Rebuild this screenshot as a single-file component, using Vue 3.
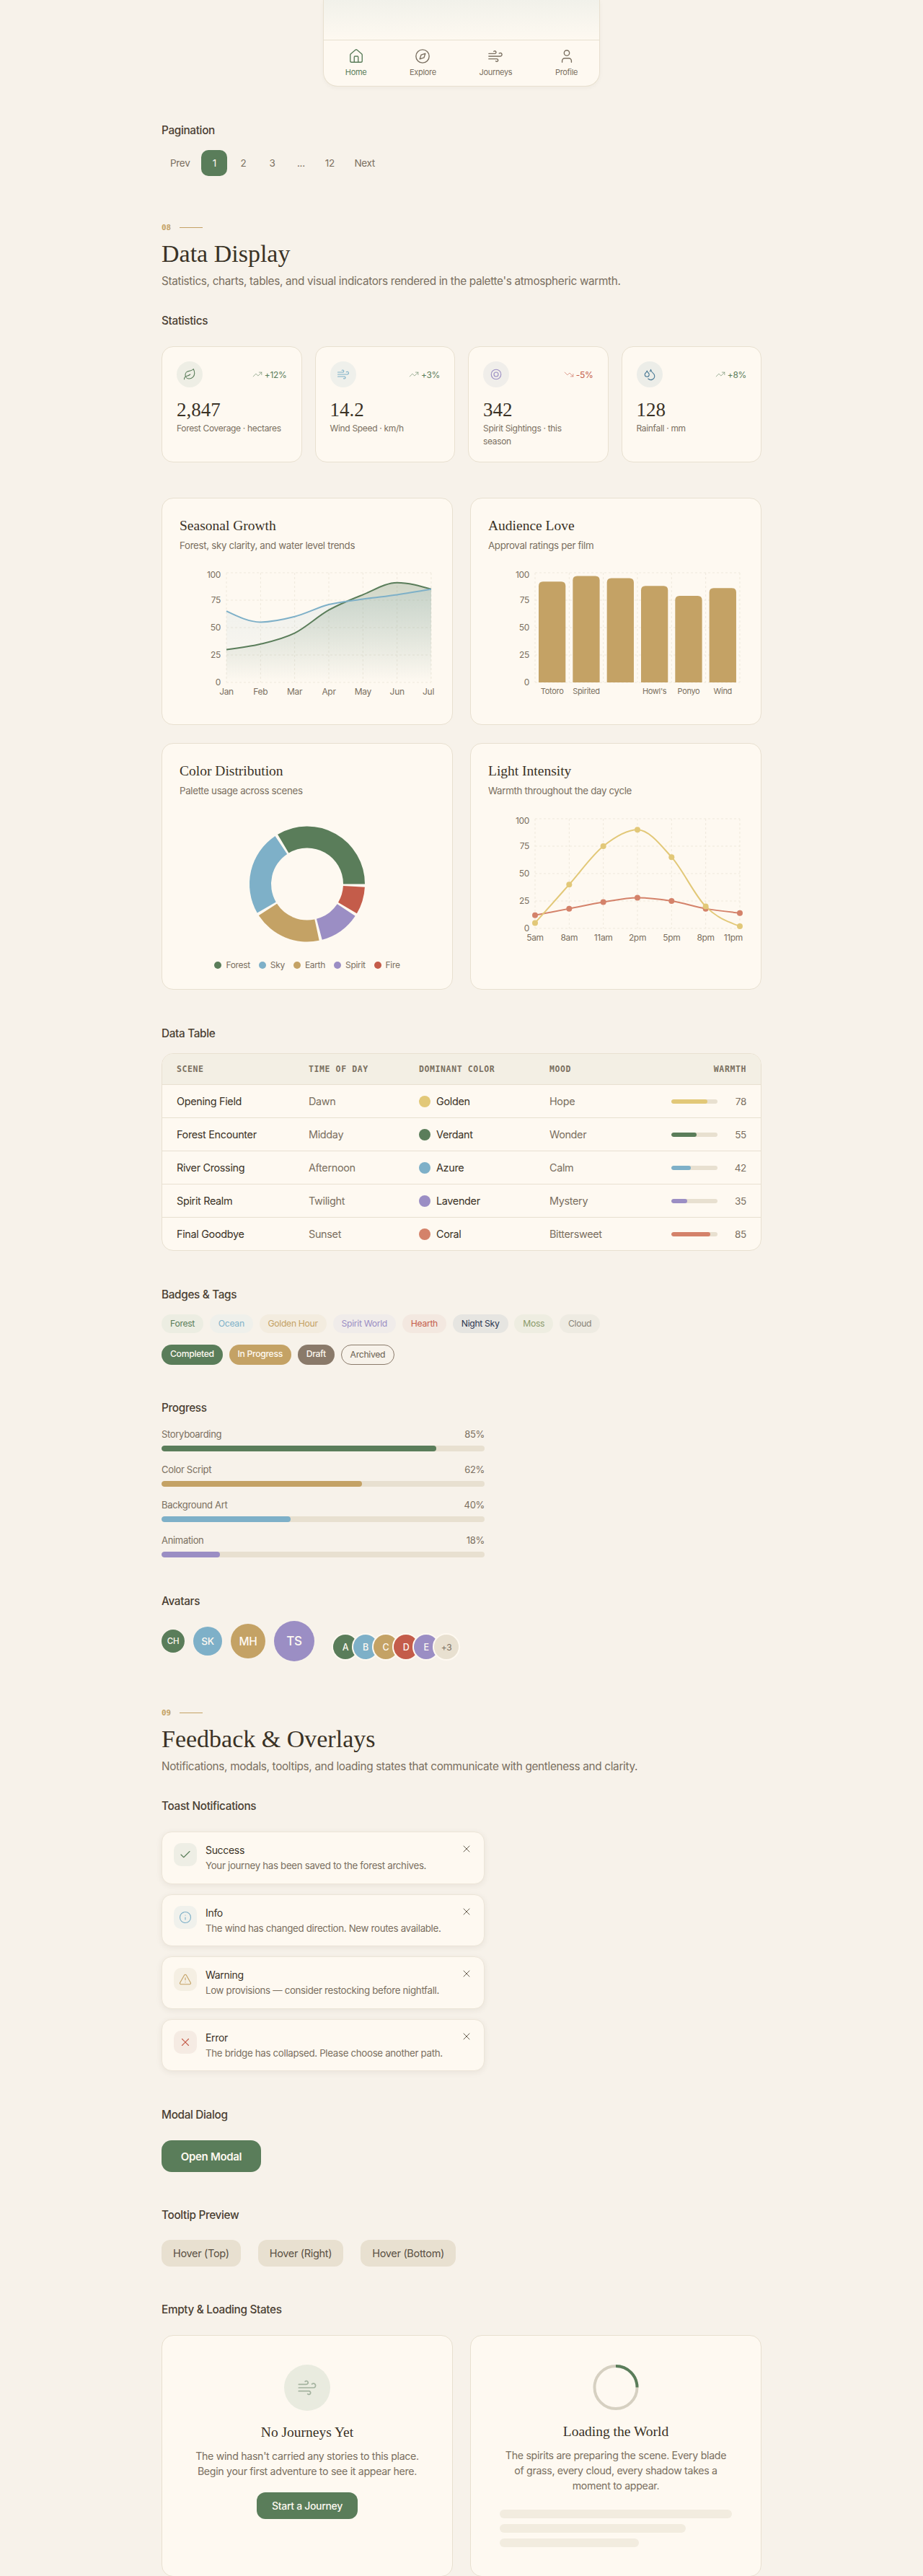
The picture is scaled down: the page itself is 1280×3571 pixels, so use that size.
<script setup>
const C = { forest: '#5a7d5a', sky: '#7eb0c8', earth: '#c4a265', spirit: '#9b8ec4', fire: '#c45c4a', coral: '#d4826a', golden: '#e2c878' }

function monotone(pts) {
  const n = pts.length
  const dx = [], s = []
  for (let i = 0; i < n - 1; i++) {
    dx[i] = pts[i + 1][0] - pts[i][0]
    s[i] = (pts[i + 1][1] - pts[i][1]) / dx[i]
  }
  const t = []
  for (let i = 1; i < n - 1; i++) {
    const p = (s[i - 1] * dx[i] + s[i] * dx[i - 1]) / (dx[i - 1] + dx[i])
    t[i] = (Math.sign(s[i - 1]) + Math.sign(s[i])) * Math.min(Math.abs(s[i - 1]), Math.abs(s[i]), 0.5 * Math.abs(p)) || 0
  }
  t[0] = (3 * s[0] - t[1]) / 2
  t[n - 1] = (3 * s[n - 2] - t[n - 2]) / 2
  let d = `M${pts[0][0]},${pts[0][1]}`
  for (let i = 0; i < n - 1; i++) {
    const h = dx[i] / 3
    d += `C${pts[i][0] + h},${pts[i][1] + h * t[i]} ${pts[i + 1][0] - h},${pts[i + 1][1] - h * t[i + 1]} ${pts[i + 1][0]},${pts[i + 1][1]}`
  }
  return d
}

const X0 = 65
const STEP = 47.33
const xAt = (i) => X0 + i * STEP
const chart = (top, zero) => {
  const yAt = (v) => zero - (v * (zero - top)) / 100
  return {
    top, zero, yAt,
    yTicks: [100, 75, 50, 25, 0].map((v) => ({ v, y: yAt(v), ty: v === 100 ? yAt(v) + 7 : yAt(v) + 4 })),
    pts: (vals) => vals.map((v, i) => [xAt(i), yAt(v)]),
  }
}
const xGrid = [0, 1, 2, 3, 4, 5, 6].map(xAt)

const growth = chart(8, 160)
const gForest = growth.pts([30, 35, 45, 66, 80, 91, 85])
const gSky = growth.pts([65, 55, 60, 71, 76, 80, 85])
const forestLine = monotone(gForest)
const skyLine = monotone(gSky)
const forestArea = `${forestLine}L${xAt(6)},160L${xAt(0)},160Z`
const skyArea = `${skyLine}L${xAt(6)},160L${xAt(0)},160Z`
const months = ['Jan', 'Feb', 'Mar', 'Apr', 'May', 'Jun', 'Jul']

const bars = [
  { label: 'Totoro', v: 92 }, { label: 'Spirited', v: 97 }, { label: '', v: 95 },
  { label: "Howl's", v: 88 }, { label: 'Ponyo', v: 79 }, { label: 'Wind', v: 86 },
].map((b, i) => {
  const y = growth.yAt(b.v)
  const x = X0 + 5 + i * STEP
  const w = 37.3
  return { ...b, cx: x + w / 2, d: `M${x},160V${y + 6}Q${x},${y} ${x + 6},${y}H${x + w - 6}Q${x + w},${y} ${x + w},${y + 6}V160Z` }
})

const light = chart(9, 161)
const hours = ['5am', '8am', '11am', '2pm', '5pm', '8pm', '11pm']
const lYellow = light.pts([5, 40, 75, 90, 65, 20, 2])
const lCoral = light.pts([12, 18, 24, 28, 25, 18, 14])
const yellowLine = monotone(lYellow)
const coralLine = monotone(lCoral)

const pieCx = 177, pieCy = 99.5, R = 80, r = 50
const pieData = [
  { name: 'Forest', v: 35, color: C.forest }, { name: 'Sky', v: 25, color: C.sky },
  { name: 'Earth', v: 20, color: C.earth }, { name: 'Spirit', v: 12, color: C.spirit },
  { name: 'Fire', v: 8, color: C.fire },
]
let ang = 0
const slices = pieData.map((p) => {
  const sweep = (345 * p.v) / 100
  const a0 = (ang * Math.PI) / 180, a1 = ((ang + sweep) * Math.PI) / 180
  ang += sweep + 3
  const pt = (rad, a) => `${pieCx + rad * Math.cos(a)},${pieCy - rad * Math.sin(a)}`
  const large = sweep > 180 ? 1 : 0
  return { color: p.color, d: `M${pt(R, a0)}A${R},${R} 0 ${large} 0 ${pt(R, a1)}L${pt(r, a1)}A${r},${r} 0 ${large} 1 ${pt(r, a0)}Z` }
})

const navItems = ['Home', 'Explore', 'Journeys', 'Profile']
const stats = [
  { icon: 'leaf', tone: 'forest', trend: '+12%', value: '2,847', label: 'Forest Coverage · hectares' },
  { icon: 'wind', tone: 'sky', trend: '+3%', value: '14.2', label: 'Wind Speed · km/h' },
  { icon: 'eye', tone: 'spirit', trend: '-5%', down: true, value: '342', label: 'Spirit Sightings · this\nseason' },
  { icon: 'drops', tone: 'water', trend: '+8%', value: '128', label: 'Rainfall · mm' },
]
const rows = [
  { scene: 'Opening Field', time: 'Dawn', dot: C.golden, color: 'Golden', mood: 'Hope', w: 78 },
  { scene: 'Forest Encounter', time: 'Midday', dot: C.forest, color: 'Verdant', mood: 'Wonder', w: 55 },
  { scene: 'River Crossing', time: 'Afternoon', dot: C.sky, color: 'Azure', mood: 'Calm', w: 42 },
  { scene: 'Spirit Realm', time: 'Twilight', dot: C.spirit, color: 'Lavender', mood: 'Mystery', w: 35 },
  { scene: 'Final Goodbye', time: 'Sunset', dot: C.coral, color: 'Coral', mood: 'Bittersweet', w: 85 },
]
const tags = [
  ['Forest', 'forest'], ['Ocean', 'ocean'], ['Golden Hour', 'gold'], ['Spirit World', 'spirit'],
  ['Hearth', 'hearth'], ['Night Sky', 'night'], ['Moss', 'moss'], ['Cloud', 'cloud'],
]
const progress = [
  { label: 'Storyboarding', v: 85, color: C.forest }, { label: 'Color Script', v: 62, color: C.earth },
  { label: 'Background Art', v: 40, color: C.sky }, { label: 'Animation', v: 18, color: C.spirit },
]
const avatars = [['CH', 's32', 'forest'], ['SK', 's40', 'sky'], ['MH', 's48', 'earth'], ['TS', 's56', 'spirit']]
const stack = [['A', 'forest'], ['B', 'sky'], ['C', 'earth'], ['D', 'fire'], ['E', 'spirit']]
const toasts = [
  { kind: 'success', title: 'Success', msg: 'Your journey has been saved to the forest archives.' },
  { kind: 'info', title: 'Info', msg: 'The wind has changed direction. New routes available.' },
  { kind: 'warning', title: 'Warning', msg: 'Low provisions — consider restocking before nightfall.' },
  { kind: 'error', title: 'Error', msg: 'The bridge has collapsed. Please choose another path.' },
]
</script>

<template>
  <div class="page">
    <div class="phone">
      <div class="phone-body"></div>
      <nav class="phone-nav">
        <div v-for="(n, i) in navItems" :key="n" class="nav-item" :class="{ active: i === 0 }">
          <svg class="ico nav-ico" viewBox="0 0 24 24">
            <template v-if="i === 0">
              <path d="M15 21v-8a1 1 0 0 0-1-1h-4a1 1 0 0 0-1 1v8" />
              <path d="M3 10a2 2 0 0 1 .709-1.528l7-5.999a2 2 0 0 1 2.582 0l7 5.999A2 2 0 0 1 21 10v9a2 2 0 0 1-2 2H5a2 2 0 0 1-2-2z" />
            </template>
            <template v-else-if="i === 1">
              <circle cx="12" cy="12" r="10" />
              <path d="m16.24 7.76-2.12 6.36-6.36 2.12 2.12-6.36 6.36-2.12z" />
            </template>
            <template v-else-if="i === 2">
              <path d="M17.7 7.7a2.5 2.5 0 1 1 1.8 4.3H2" />
              <path d="M9.6 4.6A2 2 0 1 1 11 8H2" />
              <path d="M12.6 19.4A2 2 0 1 0 14 16H2" />
            </template>
            <template v-else>
              <path d="M19 21v-2a4 4 0 0 0-4-4H9a4 4 0 0 0-4 4v2" />
              <circle cx="12" cy="7" r="4" />
            </template>
          </svg>
          <span>{{ n }}</span>
        </div>
      </nav>
    </div>

    <h3 class="sub first">Pagination</h3>
    <div class="pagination">
      <span class="pg wide">Prev</span>
      <span class="pg current">1</span>
      <span class="pg">2</span>
      <span class="pg">3</span>
      <span class="pg">...</span>
      <span class="pg">12</span>
      <span class="pg wide">Next</span>
    </div>

    <header class="sec-head">
      <div class="sec-num"><span>08</span><i></i></div>
      <h2>Data Display</h2>
      <p>Statistics, charts, tables, and visual indicators rendered in the palette's atmospheric warmth.</p>
    </header>

    <h3 class="sub roomy after-head">Statistics</h3>
    <div class="stats">
      <div v-for="s in stats" :key="s.label" class="stat">
        <div class="stat-top">
          <div class="stat-icon" :class="s.tone">
            <svg class="ico i18" viewBox="0 0 24 24">
              <template v-if="s.icon === 'leaf'">
                <path d="M11 20A7 7 0 0 1 9.8 6.1C15.5 5 17 4.48 19 2c1 2 2 4.18 2 8 0 5.5-4.78 10-10 10Z" />
                <path d="M2 21c0-3 1.85-5.36 5.08-6C9.5 14.52 12 13 13 12" />
              </template>
              <template v-else-if="s.icon === 'wind'">
                <path d="M17.7 7.7a2.5 2.5 0 1 1 1.8 4.3H2" />
                <path d="M9.6 4.6A2 2 0 1 1 11 8H2" />
                <path d="M12.6 19.4A2 2 0 1 0 14 16H2" />
              </template>
              <template v-else-if="s.icon === 'eye'">
                <circle cx="12" cy="12" r="9" />
                <circle cx="12" cy="12" r="4" />
              </template>
              <template v-else>
                <path d="M7 16.3c2.2 0 4-1.83 4-4.05 0-1.16-.57-2.26-1.71-3.19S7.29 6.75 7 5.3c-.29 1.45-1.14 2.84-2.29 3.76S3 11.1 3 12.25c0 2.22 1.8 4.05 4 4.05z" />
                <path d="M12.56 6.6A10.97 10.97 0 0 0 14 3.02c.5 2.5 2 4.9 4 6.5s3 3.5 3 5.5a6.98 6.98 0 0 1-11.91 4.97" />
              </template>
            </svg>
          </div>
          <div class="trend" :class="{ down: s.down }">
            <svg class="ico i14" viewBox="0 0 24 24">
              <template v-if="s.down">
                <path d="M22 17 13.5 8.5 8.5 13.5 2 7" /><path d="M16 17h6v-6" />
              </template>
              <template v-else>
                <path d="M22 7 13.5 15.5 8.5 10.5 2 17" /><path d="M16 7h6v6" />
              </template>
            </svg>
            <span>{{ s.trend }}</span>
          </div>
        </div>
        <div class="stat-value">{{ s.value }}</div>
        <div class="stat-label">{{ s.label }}</div>
      </div>
    </div>

    <div class="charts">
      <div class="card chart-card">
        <h4>Seasonal Growth</h4>
        <p>Forest, sky clarity, and water level trends</p>
        <svg class="chart" width="354" height="194" viewBox="0 0 354 194">
          <defs>
            <linearGradient id="gGreen" x1="0" y1="0" x2="0" y2="1">
              <stop offset="0" stop-color="#5a7d5a" stop-opacity=".28" />
              <stop offset="1" stop-color="#5a7d5a" stop-opacity="0" />
            </linearGradient>
            <linearGradient id="gBlue" x1="0" y1="0" x2="0" y2="1">
              <stop offset="0" stop-color="#7eb0c8" stop-opacity=".14" />
              <stop offset="1" stop-color="#7eb0c8" stop-opacity="0" />
            </linearGradient>
          </defs>
          <g class="grid">
            <line v-for="t in growth.yTicks" :key="t.v" :x1="xGrid[0]" :x2="xGrid[6]" :y1="t.y" :y2="t.y" />
            <line v-for="x in xGrid" :key="x" :x1="x" :x2="x" :y1="8" :y2="160" />
          </g>
          <path :d="forestArea" fill="url(#gGreen)" />
          <path :d="skyArea" fill="url(#gBlue)" />
          <path :d="forestLine" class="curve" stroke="#5a7d5a" />
          <path :d="skyLine" class="curve" stroke="#7eb0c8" />
          <g class="axis">
            <text v-for="t in growth.yTicks" :key="t.v" x="57" :y="t.ty" text-anchor="end">{{ t.v }}</text>
            <text v-for="(m, i) in months" :key="m" :x="i === 6 ? 353 : xGrid[i]" y="177" :text-anchor="i === 6 ? 'end' : 'middle'">{{ m }}</text>
          </g>
        </svg>
      </div>

      <div class="card chart-card">
        <h4>Audience Love</h4>
        <p>Approval ratings per film</p>
        <svg class="chart" width="354" height="194" viewBox="0 0 354 194">
          <g class="grid">
            <line v-for="t in growth.yTicks" :key="t.v" :x1="xGrid[0]" :x2="xGrid[6]" :y1="t.y" :y2="t.y" />
            <line v-for="x in xGrid" :key="x" :x1="x" :x2="x" :y1="8" :y2="160" />
          </g>
          <path v-for="b in bars" :key="b.cx" :d="b.d" fill="#c4a265" />
          <g class="axis">
            <text v-for="t in growth.yTicks" :key="t.v" x="57" :y="t.ty" text-anchor="end">{{ t.v }}</text>
            <text v-for="b in bars" :key="b.cx" class="small" :x="b.cx" y="176" text-anchor="middle">{{ b.label }}</text>
          </g>
        </svg>
      </div>

      <div class="card chart-card">
        <h4>Color Distribution</h4>
        <p>Palette usage across scenes</p>
        <svg class="chart" width="354" height="200" viewBox="0 0 354 200">
          <path v-for="s in slices" :key="s.color" :d="s.d" :fill="s.color" />
        </svg>
        <div class="legend">
          <span v-for="p in pieData" :key="p.name"><i :style="{ background: p.color }"></i>{{ p.name }}</span>
        </div>
      </div>

      <div class="card chart-card">
        <h4>Light Intensity</h4>
        <p>Warmth throughout the day cycle</p>
        <svg class="chart" width="354" height="200" viewBox="0 0 354 200">
          <g class="grid">
            <line v-for="t in light.yTicks" :key="t.v" :x1="xGrid[0]" :x2="xGrid[6]" :y1="t.y" :y2="t.y" />
            <line v-for="x in xGrid" :key="x" :x1="x" :x2="x" :y1="9" :y2="161" />
          </g>
          <path :d="coralLine" class="curve" stroke="#d4826a" />
          <circle v-for="p in lCoral" :key="p[0]" :cx="p[0]" :cy="p[1]" r="4" fill="#d4826a" />
          <path :d="yellowLine" class="curve" stroke="#e2c878" />
          <circle v-for="p in lYellow" :key="p[0]" :cx="p[0]" :cy="p[1]" r="4" fill="#e2c878" />
          <g class="axis">
            <text v-for="t in light.yTicks" :key="t.v" x="57" :y="t.ty" text-anchor="end">{{ t.v }}</text>
            <text v-for="(h, i) in hours" :key="h" :x="i === 6 ? 353 : xGrid[i]" y="178" :text-anchor="i === 6 ? 'end' : 'middle'">{{ h }}</text>
          </g>
        </svg>
      </div>
    </div>

    <h3 class="sub block">Data Table</h3>
    <div class="table-wrap">
      <table>
        <colgroup>
          <col class="c1" /><col class="c2" /><col class="c3" /><col class="c4" /><col />
        </colgroup>
        <thead>
          <tr>
            <th>Scene</th><th>Time of Day</th><th>Dominant Color</th><th>Mood</th><th class="right">Warmth</th>
          </tr>
        </thead>
        <tbody>
          <tr v-for="r in rows" :key="r.scene">
            <td class="strong">{{ r.scene }}</td>
            <td class="muted">{{ r.time }}</td>
            <td class="strong"><span class="swatch"><i :style="{ background: r.dot }"></i>{{ r.color }}</span></td>
            <td class="muted">{{ r.mood }}</td>
            <td>
              <div class="warm">
                <div class="warm-track"><div class="warm-fill" :style="{ width: r.w + '%', background: r.dot }"></div></div>
                <span>{{ r.w }}</span>
              </div>
            </td>
          </tr>
        </tbody>
      </table>
    </div>

    <h3 class="sub block">Badges &amp; Tags</h3>
    <div class="tags">
      <span v-for="t in tags" :key="t[0]" class="tag" :class="t[1]">{{ t[0] }}</span>
    </div>
    <div class="tags second">
      <span class="badge fill-forest">Completed</span>
      <span class="badge fill-earth">In Progress</span>
      <span class="badge fill-draft">Draft</span>
      <span class="badge outline">Archived</span>
    </div>

    <h3 class="sub block tight">Progress</h3>
    <div class="progress">
      <div v-for="p in progress" :key="p.label" class="prog">
        <div class="prog-row"><span>{{ p.label }}</span><span>{{ p.v }}%</span></div>
        <div class="prog-track"><div class="prog-fill" :style="{ width: p.v + '%', background: p.color }"></div></div>
      </div>
    </div>

    <h3 class="sub block">Avatars</h3>
    <div class="avatars">
      <div v-for="a in avatars" :key="a[0]" class="avatar" :class="[a[1], 'bg-' + a[2]]">{{ a[0] }}</div>
      <div class="stack">
        <div v-for="a in stack" :key="a[0]" class="avatar stacked" :class="'bg-' + a[1]">{{ a[0] }}</div>
        <div class="avatar stacked more">+3</div>
      </div>
    </div>

    <header class="sec-head second-head">
      <div class="sec-num"><span>09</span><i></i></div>
      <h2>Feedback &amp; Overlays</h2>
      <p>Notifications, modals, tooltips, and loading states that communicate with gentleness and clarity.</p>
    </header>

    <h3 class="sub roomy after-head">Toast Notifications</h3>
    <div class="toasts">
      <div v-for="t in toasts" :key="t.kind" class="toast">
        <div class="toast-icon" :class="t.kind">
          <svg class="ico i18" viewBox="0 0 24 24">
            <path v-if="t.kind === 'success'" d="M20 6 9 17l-5-5" />
            <template v-else-if="t.kind === 'info'">
              <circle cx="12" cy="12" r="10" /><path d="M12 16v-4" /><path d="M12 8h.01" />
            </template>
            <template v-else-if="t.kind === 'warning'">
              <path d="m21.73 18-8-14a2 2 0 0 0-3.48 0l-8 14A2 2 0 0 0 4 21h16a2 2 0 0 0 1.73-3" />
              <path d="M12 9v4" /><path d="M12 17h.01" />
            </template>
            <template v-else>
              <path d="M18 6 6 18" /><path d="m6 6 12 12" />
            </template>
          </svg>
        </div>
        <div class="toast-text">
          <div class="toast-title">{{ t.title }}</div>
          <div class="toast-msg">{{ t.msg }}</div>
        </div>
        <svg class="ico i16 toast-x" viewBox="0 0 24 24"><path d="M18 6 6 18" /><path d="m6 6 12 12" /></svg>
      </div>
    </div>

    <h3 class="sub roomy block">Modal Dialog</h3>
    <button class="open-modal">Open Modal</button>

    <h3 class="sub block wide-gap">Tooltip Preview</h3>
    <div class="tips">
      <button>Hover (Top)</button>
      <button>Hover (Right)</button>
      <button>Hover (Bottom)</button>
    </div>

    <h3 class="sub roomy block tight">Empty &amp; Loading States</h3>
    <div class="states">
      <div class="card state">
        <div class="state-icon">
          <svg class="ico i28" viewBox="0 0 24 24">
            <path d="M17.7 7.7a2.5 2.5 0 1 1 1.8 4.3H2" />
            <path d="M9.6 4.6A2 2 0 1 1 11 8H2" />
            <path d="M12.6 19.4A2 2 0 1 0 14 16H2" />
          </svg>
        </div>
        <h4>No Journeys Yet</h4>
        <p>The wind hasn't carried any stories to this place.<br />Begin your first adventure to see it appear here.</p>
        <button class="start">Start a Journey</button>
      </div>
      <div class="card state">
        <svg class="spinner" width="64" height="64" viewBox="0 0 64 64">
          <circle cx="32" cy="32" r="30" fill="none" stroke="#d6d0c1" stroke-width="4" />
          <path d="M32 2A30 30 0 0 1 62 32" fill="none" stroke="#5a7d5a" stroke-width="4" />
        </svg>
        <h4>Loading the World</h4>
        <p>The spirits are preparing the scene. Every blade<br />of grass, every cloud, every shadow takes a<br />moment to appear.</p>
        <div class="skeleton">
          <div class="sk w100"></div>
          <div class="sk w80"></div>
          <div class="sk w60"></div>
        </div>
      </div>
    </div>
  </div>
</template>

<style>
html, body { margin: 0; background: #f7f2ea; }
</style>

<style scoped>
.page {
  width: 832px;
  margin: 0 auto;
  height: 3571px;
  font-family: Inter, "Noto Sans", sans-serif;
  letter-spacing: -0.02em;
  color: #3a3226;
}
h2, h3, h4, p { margin: 0; font-weight: 400; }
.ico { fill: none; stroke: currentColor; stroke-width: 1.5; stroke-linecap: round; stroke-linejoin: round; flex: none; display: block; }
.i14 { width: 14px; height: 14px; stroke-width: 1; }
.i16 { width: 16px; height: 16px; }
.i18 { width: 18px; height: 18px; }
.i28 { width: 28px; height: 28px; }

.phone {
  width: 384px;
  margin: 0 auto;
  box-sizing: border-box;
  border: 1px solid #e8e0d0;
  border-top: 0;
  border-radius: 0 0 20px 20px;
  background: #fef9f1;
  box-shadow: 0 2px 6px rgba(58, 50, 38, 0.04);
  overflow: hidden;
}
.phone-body { height: 55px; background: linear-gradient(180deg, #f1f1ea, #fef9f1); }
.phone-nav {
  border-top: 1px solid #e8e0d0;
  display: flex;
  justify-content: space-around;
  padding: 11px 0 12px;
  height: 64px;
  box-sizing: border-box;
}
.nav-item { display: flex; flex-direction: column; align-items: center; gap: 4px; color: #7a6f60; font-size: 11px; line-height: 14px; }
.nav-item.active { color: #5a7d5a; }
.nav-ico { width: 22px; height: 22px; }

.sub { font-size: 15.3px; line-height: 20px; font-weight: 500; color: #4a4033; margin-bottom: 17px; }
.sub.roomy { margin-bottom: 25px; }
.sub.first { margin-top: 51px; }
.sub.after-head { margin-top: 33px; }
.sub.block { margin-top: 51px; }
.sub.tight { margin-top: 50px; }
.sub.wide-gap { margin-top: 50px; margin-bottom: 24px; }
h3.sub.block.tight:not(.roomy) { margin-bottom: 16px; }

.pagination { display: flex; gap: 4px; }
.pg { width: 36px; height: 36px; display: flex; align-items: center; justify-content: center; font-size: 13.5px; color: #7a6f60; border-radius: 10px; }
.pg.wide { width: auto; padding: 0 12px; }
.pg.current { background: #5a7d5a; color: #fef9f1; }

.sec-head { margin-top: 64px; }
.second-head { margin-top: 64px; }
.sec-num { display: flex; align-items: center; gap: 12px; height: 14px; color: #c4a265; font-family: "DejaVu Sans Mono", monospace; font-size: 11px; font-weight: 700; letter-spacing: 0; }
.sec-num i { display: block; width: 32px; height: 1px; background: #c4a265; }
.sec-head h2 { margin-top: 8px; font-family: "Liberation Serif", serif; font-size: 34px; line-height: 44px; letter-spacing: 0; color: #3a3226; }
.sec-head p { margin-top: 4px; font-size: 15.3px; line-height: 24px; color: #7a6f60; }

.stats { display: grid; grid-template-columns: repeat(4, 1fr); gap: 18px; }
.stat { background: #fef9f1; border: 1px solid #e8e0d0; border-radius: 16px; padding: 20px 20px 19px; }
.stat-top { display: flex; justify-content: space-between; align-items: center; }
.stat-icon { width: 36px; height: 36px; border-radius: 50%; display: flex; align-items: center; justify-content: center; }
.stat-icon.forest { background: #eeeee5; color: #5a7d5a; }
.stat-icon.sky { background: #eff0eb; color: #7eb0c8; }
.stat-icon.spirit { background: #f0eeea; color: #9b8ec4; }
.stat-icon.water { background: #ecede8; color: #4a7a96; }
.trend { display: flex; align-items: center; gap: 3px; font-size: 12px; color: #5a7d5a; }
.trend.down { color: #c45c4a; }
.stat-value { margin-top: 14px; font-family: "Liberation Serif", serif; font-size: 27px; line-height: 34px; letter-spacing: 0; }
.stat-label { font-size: 12px; line-height: 18px; color: #7a6f60; white-space: pre-line; }

.card { background: #fef9f1; border: 1px solid #e8e0d0; border-radius: 16px; box-sizing: border-box; }
.charts { margin-top: 49px; display: grid; grid-template-columns: 1fr 1fr; column-gap: 24px; row-gap: 25px; }
.chart-card { padding: 24px; }
.chart-card h4 { font-family: "Liberation Serif", serif; font-size: 19.5px; line-height: 28px; letter-spacing: 0; color: #3a3226; }
.chart-card p { margin-top: 3px; font-size: 13.3px; line-height: 20px; color: #7a6f60; }
.chart { display: block; margin-top: 20px; }
.grid line { stroke: #efe9dc; stroke-width: 1; stroke-dasharray: 3 3; }
.curve { fill: none; stroke-width: 2; }
.axis text { font-size: 12px; fill: #7a6f60; }
.axis text.small { font-size: 11px; }
.legend { margin-top: 3px; height: 18px; display: flex; justify-content: center; gap: 12px; font-size: 12px; line-height: 18px; color: #7a6f60; }
.legend span { display: flex; align-items: center; gap: 6px; }
.legend i { display: block; width: 10px; height: 10px; border-radius: 50%; }

.table-wrap { border: 1px solid #e8e0d0; border-radius: 16px; overflow: hidden; background: #fef9f1; }
table { width: 100%; table-layout: fixed; border-collapse: separate; border-spacing: 0; font-size: 14.4px; }
.c1 { width: 183px; }
.c2 { width: 153px; }
.c3 { width: 181px; }
.c4 { width: 120px; }
th { height: 43px; box-sizing: border-box; padding: 0 20px; background: #f3efe4; border-bottom: 1px solid #e8e0d0; text-align: left; font-family: "DejaVu Sans Mono", monospace; font-size: 11.5px; font-weight: 700; text-transform: uppercase; letter-spacing: 0.6px; color: #7a6f60; white-space: nowrap; }
th.right { text-align: right; }
td { height: 46px; box-sizing: border-box; padding: 0 20px; border-bottom: 1px solid #e8e0d0; white-space: nowrap; }
tr:last-child td { border-bottom: 0; height: 45px; }
.strong { color: #3a3226; }
.muted { color: #7a6f60; }
.swatch { display: flex; align-items: center; gap: 8px; }
.swatch i { display: block; width: 16px; height: 16px; border-radius: 50%; }
.warm { display: flex; align-items: center; justify-content: flex-end; color: #7a6f60; font-size: 13.5px; }
.warm span { width: 40px; text-align: right; }
.warm-track { width: 64px; height: 6px; border-radius: 3px; background: #e8e0d0; overflow: hidden; }
.warm-fill { height: 100%; border-radius: 3px; }

.tags { display: flex; gap: 8.8px; }
.tags.second { margin-top: 16px; }
.tag { height: 26px; box-sizing: border-box; padding: 0 12px; border-radius: 13px; font-size: 12.2px; line-height: 26px; }
.tag.forest { background: #ecede2; color: #5a7d5a; }
.tag.ocean { background: #eff0eb; color: #7eb0c8; }
.tag.gold { background: #f3ecdf; color: #c4a265; }
.tag.spirit { background: #f0ecea; color: #9b8ec4; }
.tag.hearth { background: #f3e8e0; color: #c45c4a; }
.tag.night { background: #e6e5e1; color: #2c3550; }
.tag.moss { background: #eeede1; color: #8a9a6a; }
.tag.cloud { background: #eeebe2; color: #8a8578; }
.badge { height: 28px; box-sizing: border-box; padding: 0 12px; border-radius: 14px; font-size: 12.2px; line-height: 26px; font-weight: 500; }
.fill-forest { background: #5a7d5a; color: #fef9f1; }
.fill-earth { background: #c4a265; color: #fef9f1; }
.fill-draft { background: #8a7a6a; color: #fef9f1; }
.outline { border: 1px solid #8a7a6a; color: #6a5f50; font-weight: 400; line-height: 26px; }

.progress { width: 448px; display: flex; flex-direction: column; gap: 15px; }
.prog-row { display: flex; justify-content: space-between; font-size: 13px; line-height: 20px; color: #7a6f60; margin-bottom: 6px; }
.prog-track { height: 8px; border-radius: 4px; background: #e8e0d0; overflow: hidden; }
.prog-fill { height: 100%; border-radius: 4px; }

.avatars { display: flex; align-items: center; gap: 12px; height: 56px; }
.avatar { border-radius: 50%; display: flex; align-items: center; justify-content: center; color: #fef9f1; font-weight: 500; box-sizing: border-box; flex: none; }
.s32 { width: 32px; height: 32px; font-size: 11.5px; }
.s40 { width: 40px; height: 40px; font-size: 13.5px; }
.s48 { width: 48px; height: 48px; font-size: 15.5px; }
.s56 { width: 56px; height: 56px; font-size: 17px; }
.bg-forest { background: #5a7d5a; }
.bg-sky { background: #7eb0c8; }
.bg-earth { background: #c4a265; }
.bg-spirit { background: #9b8ec4; }
.bg-fire { background: #c45c4a; }
.stack { display: flex; margin-left: 12px; margin-top: 16px; }
.stacked { width: 38px; height: 38px; border: 2px solid #fef9f1; font-size: 12.5px; }
.stacked + .stacked { margin-left: -10px; }
.more { background: #e8e0d0; color: #7a6f60; font-weight: 400; font-size: 12px; }

.toasts { width: 448px; display: flex; flex-direction: column; gap: 14px; }
.toast { display: flex; gap: 12px; box-sizing: border-box; height: 72.6px; padding: 15px 16px; background: #fef9f1; border: 1px solid #ece5d8; border-radius: 14px; box-shadow: 0 2px 8px rgba(58, 50, 38, 0.08); }
.toast-icon { width: 32px; height: 32px; border-radius: 10px; display: flex; align-items: center; justify-content: center; flex: none; }
.toast-icon.success { background: #eeeee5; color: #5a7d5a; }
.toast-icon.info { background: #f0f1ec; color: #7eb0c8; }
.toast-icon.warning { background: #f5efe3; color: #c4a265; }
.toast-icon.error { background: #f5ebe3; color: #c45c4a; }
.toast-text { flex: 1; min-width: 0; }
.toast-title { font-size: 14px; line-height: 20px; font-weight: 400; color: #3a3226; }
.toast-msg { margin-top: 2px; font-size: 13.3px; line-height: 18.6px; color: #7a6f60; white-space: nowrap; }
.toast-x { color: #6a5f50; }

button { border: 0; font-family: inherit; letter-spacing: inherit; display: block; padding: 0; }
.open-modal { width: 138px; height: 44px; border-radius: 14px; background: #5a7d5a; color: #fef9f1; font-size: 15px; font-weight: 600; }
.tips { display: flex; gap: 24px; }
.tips button { height: 37px; padding: 0 16px; border-radius: 12px; background: #e8e0d0; color: #5a5044; font-size: 14.5px; }

.states { display: grid; grid-template-columns: 1fr 1fr; gap: 24px; }
.state { height: 335px; padding: 40px; text-align: center; display: flex; flex-direction: column; align-items: center; }
.state-icon { width: 64px; height: 64px; border-radius: 50%; background: #e9ebdf; color: #a5b4a0; display: flex; align-items: center; justify-content: center; }
.state h4 { margin-top: 16px; font-family: "Liberation Serif", serif; font-size: 19.5px; line-height: 28px; letter-spacing: 0; }
.state p { margin-top: 8px; font-size: 14.2px; line-height: 21px; color: #7a6f60; white-space: nowrap; }
.start { margin-top: 19px; width: 140px; height: 37px; border-radius: 12px; background: #5a7d5a; color: #fef9f1; font-size: 14px; font-weight: 500; }
.spinner { display: block; }
.skeleton { width: 100%; margin-top: 23px; display: flex; flex-direction: column; gap: 8px; }
.sk { height: 12px; border-radius: 6px; background: #f2ecdf; }
.w100 { width: 100%; }
.w80 { width: 80%; }
.w60 { width: 60%; }
</style>
